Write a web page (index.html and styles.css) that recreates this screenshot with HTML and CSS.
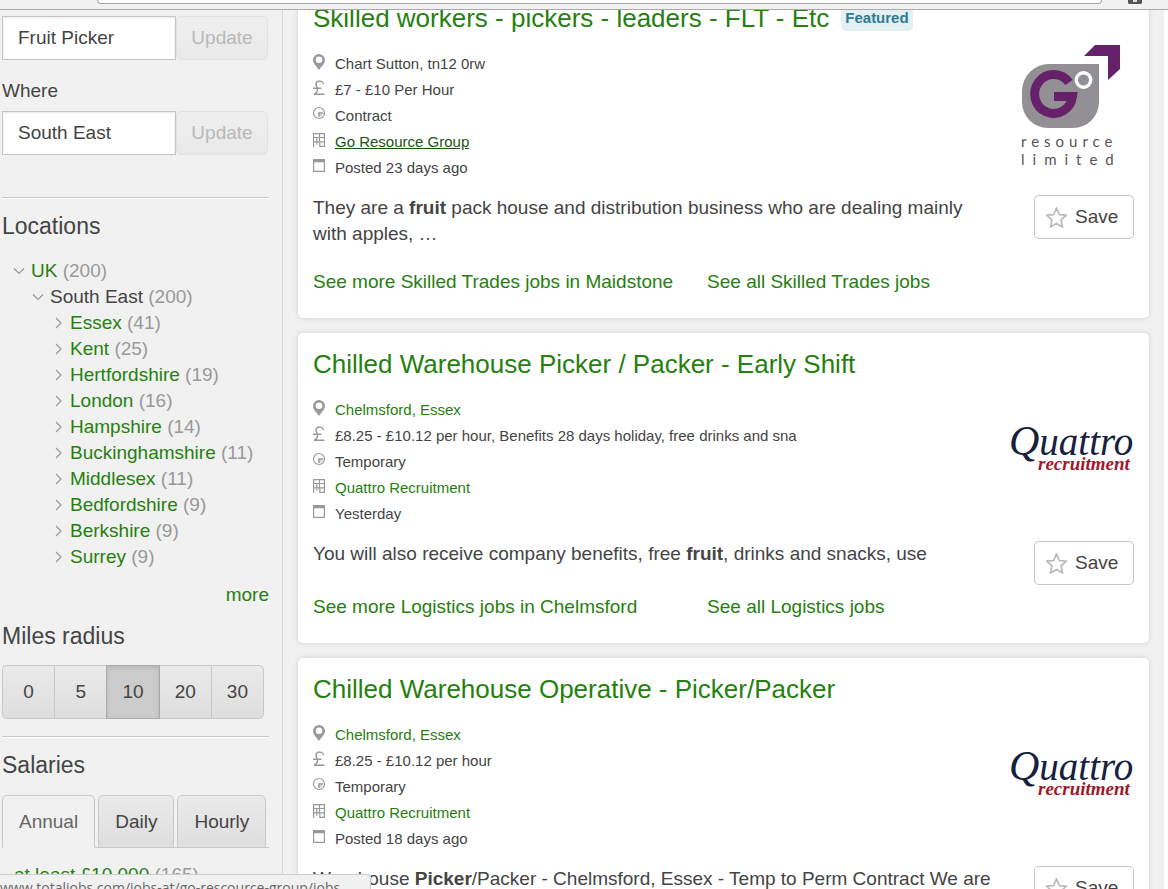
FILE: index.html
```html
<!DOCTYPE html>
<html lang="en">
<head>
<meta charset="utf-8">
<title>Fruit Picker jobs in South East</title>
<link rel="stylesheet" href="styles.css">
</head>
<body>
<svg class="sprite" aria-hidden="true">
  <symbol id="pin" viewBox="0 0 14 16"><path fill-rule="evenodd" d="M7 0a6 5.900 0 0 0-6 5.900C1 9.500 4.500 12 7 16c2.500-4 6-6.500 6-10.100A6 5.900 0 0 0 7 0zm0 2.500a3.300 3.300 0 1 1 0 6.600 3.300 3.300 0 0 1 0-6.600z"/></symbol>
  <symbol id="pound" viewBox="0 0 14 16"><path fill="none" stroke="currentColor" stroke-width="1.500" d="M11.300 4.200C11 .2 4 0 4 4.200c0 2 1.500 3.200 1.500 5.300 0 2-1.300 3.900-3.500 4.700h10.500M1 8.300h8.500"/></symbol>
  <symbol id="clock" viewBox="0 0 14 16"><circle cx="7" cy="7" r="5.500" fill="none" stroke="currentColor" stroke-width="1.200"/><path d="M6.200 6.200h5v1.600H7.800V11H6.200zM8.500 8.500h2l-2 2z"/></symbol>
  <symbol id="building" viewBox="0 0 14 16"><path fill="none" stroke="currentColor" stroke-width="1.200" d="M1.600 15V1.600h10.800v12.800H7.800V10M7.500 1.600V10M1.600 5.500h10.800M1.600 9.800h10.800M4.800 5.500v4.300M4.800 9.800v3"/></symbol>
  <symbol id="calendar" viewBox="0 0 14 16"><path fill-rule="evenodd" d="M1 1h12v13H1zM2.200 4.200v8.600h9.600V4.200z"/></symbol>
  <symbol id="star" viewBox="0 0 24 24"><path fill="none" stroke="#bbb" stroke-width="1.800" stroke-linejoin="round" d="M12 2l2.900 6.900 7.400.7-5.600 5 1.700 7.400L12 18.200 5.600 22l1.700-7.400-5.600-5 7.400-.7z"/></symbol>
  <symbol id="down" viewBox="0 0 12 12"><path fill="none" stroke="#999" stroke-width="1.200" d="M1 3.500l5 5 5-5"/></symbol>
  <symbol id="right" viewBox="0 0 12 12"><path fill="none" stroke="#999" stroke-width="1.200" d="M4 1l5 5-5 5"/></symbol>
</svg>

<header class="chrome"><div class="address"></div><span class="extension"></span></header>

<div class="page">
  <aside class="sidebar">
    <form class="search">
      <input class="field" aria-label="Keywords" value="Fruit Picker"><button class="update" type="button" disabled>Update</button>
    </form>
    <label class="where" for="where">Where</label>
    <form class="search">
      <input class="field" id="where" value="South East"><button class="update" type="button" disabled>Update</button>
    </form>
    <section class="block locations">
      <h2>Locations</h2>
      <ul class="tree">
        <li><svg class="chev"><use href="#down"/></svg><a href="#">UK</a> <span>(200)</span>
          <ul>
            <li><svg class="chev"><use href="#down"/></svg><b>South East</b> <span>(200)</span>
              <ul class="leaf">
                <li><svg class="chev"><use href="#right"/></svg><a href="#">Essex</a> <span>(41)</span></li>
                <li><svg class="chev"><use href="#right"/></svg><a href="#">Kent</a> <span>(25)</span></li>
                <li><svg class="chev"><use href="#right"/></svg><a href="#">Hertfordshire</a> <span>(19)</span></li>
                <li><svg class="chev"><use href="#right"/></svg><a href="#">London</a> <span>(16)</span></li>
                <li><svg class="chev"><use href="#right"/></svg><a href="#">Hampshire</a> <span>(14)</span></li>
                <li><svg class="chev"><use href="#right"/></svg><a href="#">Buckinghamshire</a> <span>(11)</span></li>
                <li><svg class="chev"><use href="#right"/></svg><a href="#">Middlesex</a> <span>(11)</span></li>
                <li><svg class="chev"><use href="#right"/></svg><a href="#">Bedfordshire</a> <span>(9)</span></li>
                <li><svg class="chev"><use href="#right"/></svg><a href="#">Berkshire</a> <span>(9)</span></li>
                <li><svg class="chev"><use href="#right"/></svg><a href="#">Surrey</a> <span>(9)</span></li>
              </ul>
            </li>
          </ul>
        </li>
      </ul>
      <a class="more" href="#">more</a>
      <h2>Miles radius</h2>
      <div class="radius">
        <button type="button">0</button><button type="button">5</button><button type="button" class="on">10</button><button type="button">20</button><button type="button">30</button>
      </div>
    </section>
    <section class="block salaries">
      <h2>Salaries</h2>
      <div class="tabs">
        <button type="button" class="active">Annual</button><button type="button">Daily</button><button type="button">Hourly</button>
      </div>
      <p class="salary"><a href="#">at least £10,000</a> <span>(165)</span></p>
    </section>
  </aside>

  <main class="results">
    <article class="card">
      <div class="info">
        <h3><a href="#">Skilled workers - pickers - leaders - FLT - Etc</a><span class="featured">Featured</span></h3>
        <ul class="meta">
          <li><svg><use href="#pin"/></svg>Chart Sutton, tn12 0rw</li>
          <li><svg><use href="#pound"/></svg>£7 - £10 Per Hour</li>
          <li><svg><use href="#clock"/></svg>Contract</li>
          <li><svg><use href="#building"/></svg><a class="hovered" href="#">Go Resource Group</a></li>
          <li><svg><use href="#calendar"/></svg>Posted 23 days ago</li>
        </ul>
        <p class="desc">They are a <strong>fruit</strong> pack house and distribution business who are dealing mainly with apples, …</p>
      </div>
      <div class="side">
        <svg class="logo" viewBox="0 0 125 125" role="img" aria-label="Go Resource Limited">
          <path fill="#929094" d="M40 21h50v38a26 26 0 0 1-26 26H39a26 26 0 0 1-26-26V48a27 27 0 0 1 27-27z"/>
          <path fill="#67216b" d="M75 13L86 2h25v24L99 37V13z"/>
          <path fill="none" stroke="#67216b" stroke-width="9" d="M60 39.500A19 19.500 0 1 0 63.500 53.500H45"/>
          <circle cx="74.500" cy="37" r="7.200" fill="none" stroke="#fff" stroke-width="3.400"/>
          <text class="go-a" x="12" y="104">resource</text>
          <text class="go-b" x="12" y="122">limited</text>
        </svg>
        <button class="save" type="button"><svg><use href="#star"/></svg>Save</button>
      </div>
      <nav class="links"><a href="#">See more Skilled Trades jobs in Maidstone</a><a href="#">See all Skilled Trades jobs</a></nav>
    </article>

    <article class="card">
      <div class="info">
        <h3><a href="#">Chilled Warehouse Picker / Packer - Early Shift</a></h3>
        <ul class="meta">
          <li><svg><use href="#pin"/></svg><a href="#">Chelmsford, Essex</a></li>
          <li><svg><use href="#pound"/></svg>£8.25 - £10.12 per hour, Benefits 28 days holiday, free drinks and sna</li>
          <li><svg><use href="#clock"/></svg>Temporary</li>
          <li><svg><use href="#building"/></svg><a href="#">Quattro Recruitment</a></li>
          <li><svg><use href="#calendar"/></svg>Yesterday</li>
        </ul>
        <p class="desc">You will also receive company benefits, free <strong>fruit</strong>, drinks and snacks, use</p>
      </div>
      <div class="side">
        <svg class="logo" viewBox="0 0 125 125" role="img" aria-label="Quattro recruitment">
          <text class="q-top" x="0" y="66"><tspan class="q-cap">Q</tspan>uattro</text>
          <text class="q-sub" x="29" y="81">recruitment</text>
        </svg>
        <button class="save" type="button"><svg><use href="#star"/></svg>Save</button>
      </div>
      <nav class="links"><a href="#">See more Logistics jobs in Chelmsford</a><a href="#">See all Logistics jobs</a></nav>
    </article>

    <article class="card">
      <div class="info">
        <h3><a href="#">Chilled Warehouse Operative - Picker/Packer</a></h3>
        <ul class="meta">
          <li><svg><use href="#pin"/></svg><a href="#">Chelmsford, Essex</a></li>
          <li><svg><use href="#pound"/></svg>£8.25 - £10.12 per hour</li>
          <li><svg><use href="#clock"/></svg>Temporary</li>
          <li><svg><use href="#building"/></svg><a href="#">Quattro Recruitment</a></li>
          <li><svg><use href="#calendar"/></svg>Posted 18 days ago</li>
        </ul>
        <p class="desc">Warehouse <strong>Picker</strong>/Packer - Chelmsford, Essex - Temp to Perm Contract We are</p>
      </div>
      <div class="side">
        <svg class="logo" viewBox="0 0 125 125" role="img" aria-label="Quattro recruitment">
          <text class="q-top" x="0" y="66"><tspan class="q-cap">Q</tspan>uattro</text>
          <text class="q-sub" x="29" y="81">recruitment</text>
        </svg>
        <button class="save" type="button"><svg><use href="#star"/></svg>Save</button>
      </div>
    </article>
  </main>
</div>
<div class="status">www.totaljobs.com/jobs-at/go-rescource-group/jobs</div>
</body>
</html>
```
FILE: styles.css
```css
* { box-sizing: border-box; }
body {
  margin: 0;
  height: 100vh;
  display: flex;
  flex-direction: column;
  overflow: hidden;
  background: #f1f1f1;
  color: #444;
  font: 19px/26px "Liberation Sans", Arial, sans-serif;
}
.sprite { position: absolute; width: 0; height: 0; }
a { color: #26800f; text-decoration: none; }
ul { list-style: none; margin: 0; padding: 0; }
h2, h3, p { margin: 0; font-weight: normal; }
button, input { font: inherit; color: inherit; margin: 0; }

.chrome {
  flex: none;
  display: flex;
  align-items: flex-start;
  height: 10px;
  padding: 0 26px 0 97px;
  border-bottom: 1px solid #aaa;
}
.address {
  flex: 1;
  height: 4px;
  margin-right: 26px;
  background: #fff;
  border: 1px solid #a5a5a5;
  border-top: 0;
  border-radius: 0 0 4px 4px;
}
.extension {
  width: 14px;
  height: 4px;
  border: 1px solid #555;
  border-width: 0 5px 2px;
  border-radius: 0 0 2px 2px;
  background: #ddd;
}

.page { flex: 1; min-height: 0; display: flex; overflow: hidden; border-right: 4px solid #fff; }

.sidebar { flex: none; width: 283px; padding: 6px 13px 0 2px; border-right: 1px solid #d8d8d8; }
.search { display: flex; height: 44px; }
.field {
  width: 174px;
  padding: 0 15px;
  border: 1px solid #c4c4c4;
  border-radius: 0;
  background: #fff;
  box-shadow: inset 0 1px 2px #e8e8e8;
}
.update {
  width: 92px;
  padding: 0;
  border: 1px solid #e2e2e2;
  border-radius: 5px;
  background: linear-gradient(#efefef, #e9e9e9);
  color: #b9b9b9;
}
.where { display: block; margin: 18px 0 7px; }
.block { border-top: 1px solid #c8c8c8; box-shadow: inset 0 1px 0 #fff; }
.block h2 { font-size: 23px; line-height: 30px; }
.locations { margin-top: 42px; padding-top: 13px; }
.tree { padding: 17px 0 0 11px; }
.tree ul { padding-left: 19px; }
.tree .leaf { padding-left: 20px; }
.tree span, .salary span { color: #999; }
.tree b { font-weight: normal; }
.chev { width: 12px; height: 12px; margin-right: 6px; vertical-align: 0; }
.more { display: block; margin: 12px 0 13px; text-align: right; }
.radius { display: flex; width: 262px; height: 54px; margin: 14px 0 17px; }
.radius button {
  flex: 1;
  padding: 0;
  border: 1px solid #c8c8c8;
  border-right-width: 0;
  background: linear-gradient(#eaeaea, #dedede);
}
.radius button:first-child { border-radius: 5px 0 0 5px; }
.radius button:last-child { border-radius: 0 5px 5px 0; border-right-width: 1px; }
.radius .on { background: #ccc; border: 1px solid #aaa; box-shadow: inset 0 2px 4px #b4b4b4; }
.radius .on + button { border-left: 0; }
.salaries { padding-top: 13px; }
.tabs { display: flex; gap: 3px; height: 53px; margin-top: 15px; border-bottom: 1px solid #c8c8c8; }
.tabs button {
  height: 53px;
  padding: 0 16px;
  border: 1px solid #c8c8c8;
  border-radius: 5px 5px 0 0;
  background: linear-gradient(#eaeaea, #dedede);
}
.tabs .active { background: #f1f1f1; border-bottom-color: #f1f1f1; color: #666; }
.salary { padding: 14px 12px; }

.results { flex: 1; min-width: 0; margin-top: -23px; padding: 0 15px; }
.card {
  display: grid;
  grid-template-columns: minmax(0, 1fr) 125px;
  column-gap: 16px;
  margin-bottom: 15px;
  padding: 15px 15px 23px;
  border-radius: 5px;
  background: #fff;
  box-shadow: 0 0 5px #ccc;
}
.card h3 { display: flex; align-items: center; gap: 12px; font-size: 26px; line-height: 32px; white-space: nowrap; }
.featured {
  padding: 0 4px;
  border-radius: 5px;
  background: #e3f1f5;
  color: #2c7b92;
  font: bold 15px/26px "Liberation Sans", Arial, sans-serif;
}
.meta { margin: 17px 0 14px; font-size: 15px; }
.meta li { display: flex; height: 26px; }
.meta svg { flex: none; width: 14px; height: 16px; margin: 3px 9px 0 -1px; color: #999; fill: #999; }
.meta .hovered { color: #1b5514; text-decoration: underline; }
.desc { min-height: 31px; }
.side { display: flex; flex-direction: column; align-items: flex-end; padding-top: 41px; height: 0; }
.logo { flex: none; width: 125px; height: 125px; margin-bottom: 27px; }
.save {
  flex: none;
  display: flex;
  align-items: center;
  gap: 7px;
  width: 100px;
  height: 44px;
  padding: 0 10px;
  border: 1px solid #c4c4c4;
  border-radius: 5px;
  background: #fff;
}
.save svg { flex: none; width: 23px; height: 23px; }
.links { grid-column: 1 / -1; display: grid; grid-template-columns: 48% 1fr; margin-top: 22px; }

.q-top { font: italic 39px "Liberation Serif", serif; fill: #16203f; }
.q-cap { font-size: 42px; }
.q-sub { font: italic bold 19px "Liberation Serif", serif; fill: #a3182b; }
.go-a, .go-b { font: 15px Lato, sans-serif; fill: #555; letter-spacing: 5px; }
.go-b { letter-spacing: 8px; }

.status {
  position: absolute;
  left: 0;
  bottom: 0;
  width: 371px;
  height: 15px;
  overflow: hidden;
  border: 1px solid #ccc;
  border-width: 1px 1px 0 0;
  border-radius: 0 4px 0 0;
  background: #f1f1f1;
  color: #666;
  font: 14px/26px "Open Sans", sans-serif;
  white-space: nowrap;
}
```
